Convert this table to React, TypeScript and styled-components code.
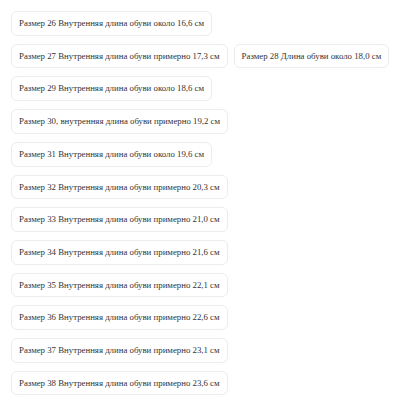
import React from "react";
import styled, { createGlobalStyle } from "styled-components";

const GlobalStyle = createGlobalStyle`
  body {
    margin: 0;
    background: #fff;
  }
`;

const sizeRows = [
  ["Размер 26 Внутренняя длина обуви около 16,6 см"],
  ["Размер 27 Внутренняя длина обуви примерно 17,3 см", "Размер 28 Длина обуви около 18,0 см"],
  ["Размер 29 Внутренняя длина обуви около 18,6 см"],
  ["Размер 30, внутренняя длина обуви примерно 19,2 см"],
  ["Размер 31 Внутренняя длина обуви около 19,6 см"],
  ["Размер 32 Внутренняя длина обуви примерно 20,3 см"],
  ["Размер 33 Внутренняя длина обуви примерно 21,0 см"],
  ["Размер 34 Внутренняя длина обуви примерно 21,6 см"],
  ["Размер 35 Внутренняя длина обуви примерно 22,1 см"],
  ["Размер 36 Внутренняя длина обуви примерно 22,6 см"],
  ["Размер 37 Внутренняя длина обуви примерно 23,1 см"],
  ["Размер 38 Внутренняя длина обуви примерно 23,6 см"],
];

const SizeList = styled.div`
  display: flex;
  flex-direction: column;
  align-items: flex-start;
  gap: 8px;
  padding: 11px;
`;

const SizeRow = styled.div`
  display: flex;
  gap: 6px;
`;

const SizeOption = styled.div`
  padding: 5px 7px;
  line-height: 12.7px;
  font-family: "Liberation Serif", "Times New Roman", serif;
  font-size: 8.8px;
  color: #333;
  background: #fff;
  border: 1px solid #ececec;
  border-radius: 6px;
  cursor: pointer;
  white-space: nowrap;
`;

const App = () => (
  <>
    <GlobalStyle />
    <SizeList>
      {sizeRows.map((row) => (
        <SizeRow key={row[0]}>
          {row.map((label) => (
            <SizeOption key={label}>{label}</SizeOption>
          ))}
        </SizeRow>
      ))}
    </SizeList>
  </>
);

export default App;
